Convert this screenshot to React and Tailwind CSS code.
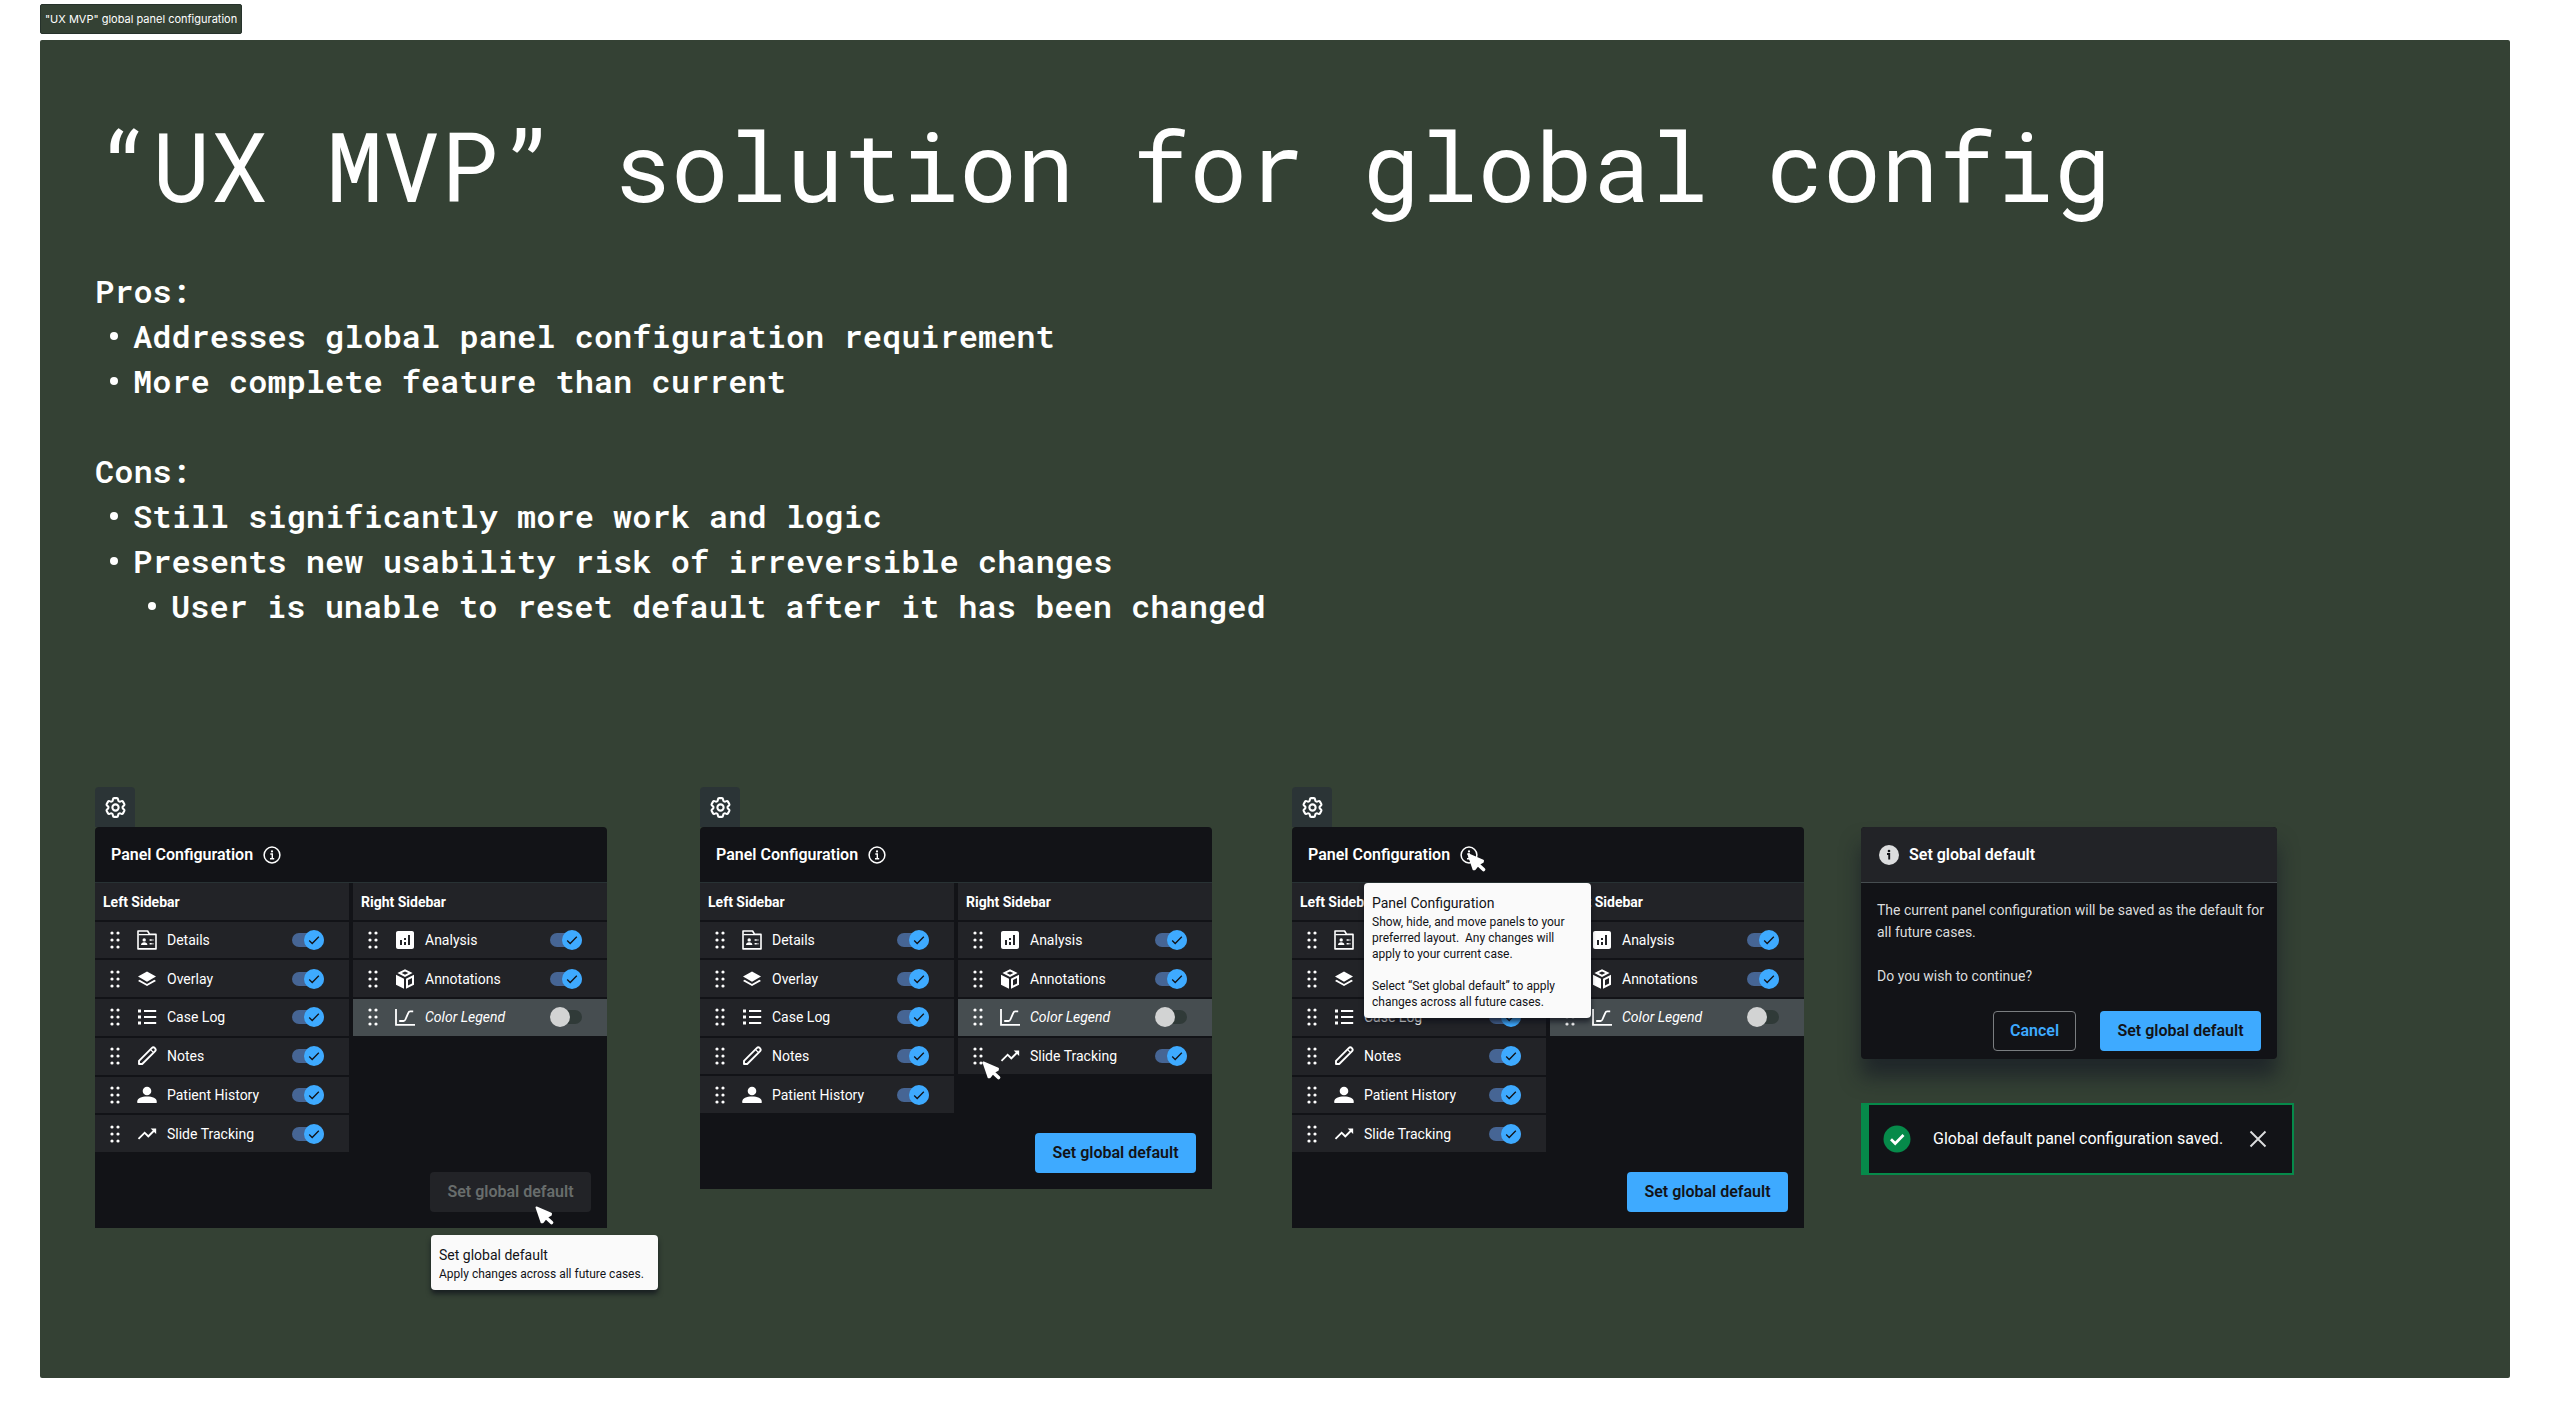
import React from "react";
import { HiOutlineCog6Tooth } from "react-icons/hi2";
import { MdTrendingUp, MdAnalytics } from "react-icons/md";

function DetailsIcon() {
  return (
    <svg viewBox="0 0 20 20" className="size-5" fill="none" stroke="currentColor" strokeWidth="1.6" aria-hidden="true">
      <path d="M1 18.9V1h9.6l2 3.4H19v14.5H1z" strokeLinejoin="round" />
      <path d="M1.5 4.6h11" strokeWidth="1.3" />
      <circle cx="7.2" cy="9.9" r="1.7" fill="currentColor" stroke="none" />
      <path d="M4 14.9c0-1.9 1.4-2.7 3.2-2.7s3.2.8 3.2 2.7z" fill="currentColor" stroke="none" />
      <path d="M12.6 10h3.8M12.6 13.8h3.8" strokeDasharray="2.2 .7" />
    </svg>
  );
}

function LayersIcon() {
  return (
    <svg viewBox="0 0 20 20" className="size-5" fill="currentColor" aria-hidden="true">
      <path d="M10 2.600l9 5-9 5.200-9-5.200z" />
      <path d="M10 14.900L2.600 10.700 1 11.900l9 5.200 9-5.200-1.600-1.200z" />
    </svg>
  );
}

function PersonIcon() {
  return (
    <svg viewBox="0 0 20 20" className="size-5" fill="currentColor" aria-hidden="true">
      <circle cx="10" cy="6" r="4.300" />
      <path d="M.300 18v-1.800c0-3 4.200-4.700 9.700-4.700s9.700 1.700 9.700 4.700V18z" />
    </svg>
  );
}

function ListIcon() {
  return (
    <svg viewBox="0 0 20 20" className="size-5" fill="currentColor" aria-hidden="true">
      <path d="M1 2.4h3v3H1zM1 8.5h3v3H1zM1 14.6h3v3H1zM7 2.9h12.2v2H7zM7 9h12.2v2H7zM7 15.1h12.2v2H7z" />
    </svg>
  );
}

function PencilIcon() {
  return (
    <svg viewBox="0 0 20 20" className="size-5" fill="none" stroke="currentColor" strokeWidth="1.9" strokeLinejoin="round" aria-hidden="true">
      <path d="M2 18v-3.200L14.700 2.100a2.100 2.100 0 0 1 3.200 3.200L5.200 18H2z" />
      <path d="M13.600 3.600l2.800 2.800" strokeWidth="1.3" />
    </svg>
  );
}

function CubeIcon() {
  return (
    <svg viewBox="0 0 20 20" className="size-5" fill="currentColor" aria-hidden="true">
      <path fillRule="evenodd" d="M10 .3l7.6 3.8L10 7.9 2.4 4.100zM10 2.500L6.700 4.100 10 5.700l3.300-1.600z" />
      <path d="M1 5.700l8 4v10L1 15.700z" />
      <path fillRule="evenodd" d="M19 5.700l-8 4v10l8-4zM17 9l-4 2v5.400l4-2z" />
    </svg>
  );
}

function LegendIcon() {
  return (
    <svg viewBox="0 0 20 20" className="size-5" fill="none" stroke="currentColor" strokeWidth="1.8" aria-hidden="true">
      <path d="M1 2v15.800h19" />
      <path d="M4.200 14h4.300c1 0 1.500-.600 1.900-1.500l2.900-6.600c.4-1 .9-1.500 1.900-1.500h3" />
    </svg>
  );
}

function InfoIcon() {
  return (
    <svg viewBox="0 0 18 18" className="size-[18px]" fill="none" stroke="currentColor" aria-hidden="true">
      <circle cx="9" cy="9" r="7.900" strokeWidth="1.500" />
      <path d="M7.300 8h2v4.600M7 12.700h4.200" strokeWidth="1.400" />
      <circle cx="9" cy="5.400" r="1.100" fill="currentColor" stroke="none" />
    </svg>
  );
}

function Cursor({ className }) {
  return (
    <svg viewBox="0 0 19 19" className={"absolute z-20 size-[19px] text-white " + className} fill="currentColor" stroke="currentColor" strokeLinejoin="round" strokeLinecap="round" aria-hidden="true">
      <path d="M1.500 1.500L16 7.700l-.2 1.200-4 2.300-4 5-1.200.1z" strokeWidth="2" />
      <path d="M10.500 11l6 5.500" strokeWidth="3.600" />
    </svg>
  );
}

function Grip() {
  return (
    <svg viewBox="0 0 10 18" className="h-[18px] w-2.5" fill="currentColor" aria-hidden="true">
      {[2, 9, 16].map((y) => (
        <React.Fragment key={y}>
          <circle cx="2" cy={y} r="1.600" />
          <circle cx="8" cy={y} r="1.600" />
        </React.Fragment>
      ))}
    </svg>
  );
}

const PANELS = {
  details: { label: "Details", icon: <DetailsIcon /> },
  overlay: { label: "Overlay", icon: <LayersIcon /> },
  caseLog: { label: "Case Log", icon: <ListIcon /> },
  notes: { label: "Notes", icon: <PencilIcon /> },
  history: { label: "Patient History", icon: <PersonIcon /> },
  tracking: { label: "Slide Tracking", icon: <MdTrendingUp className="size-[22px]" /> },
  analysis: { label: "Analysis", icon: <MdAnalytics className="size-6" /> },
  annotations: { label: "Annotations", icon: <CubeIcon /> },
  legend: { label: "Color Legend", icon: <LegendIcon />, off: true },
};

function Switch({ id, on }) {
  return (
    <span className="relative flex h-5 w-8 items-center">
      <input
        id={id}
        type="checkbox"
        role="switch"
        defaultChecked={on}
        className="peer h-3.5 w-8 appearance-none rounded-full bg-[#303a38] checked:bg-[#466594]"
      />
      <span className="pointer-events-none absolute left-0 flex size-5 items-center justify-center rounded-full bg-[#d2d3d3] text-transparent peer-checked:left-3 peer-checked:bg-[#3eaaff] peer-checked:text-[#121317]">
        <svg viewBox="0 0 12 12" className="size-3" fill="none" stroke="currentColor" strokeWidth="1.300" aria-hidden="true">
          <path d="M1.200 6.500l3 3L10.800 2.800" />
        </svg>
      </span>
    </span>
  );
}

function Column({ title, items, rows, prefix }) {
  return (
    <section className={"grid gap-0.5 " + rows}>
      <h3 className="flex items-center bg-[#222327] pt-0.5 pl-2 text-sm font-bold">{title}</h3>
      {items.map((key) => {
        const { label, icon, off } = PANELS[key];
        const id = prefix + "-" + key;
        return (
          <div key={key} className={"flex items-center pr-[25px] pl-[15px] " + (off ? "bg-[#464d50]" : "bg-[#222327]")}>
            <button type="button" aria-label={"Move " + label} className="shrink-0">
              <Grip />
            </button>
            <span className="ml-3 flex w-[30px] shrink-0 items-center justify-center">{icon}</span>
            <label htmlFor={id} className={"ml-[5px] flex-1 text-sm " + (off ? "italic" : "")}>
              {label}
            </label>
            <Switch id={id} on={!off} />
          </div>
        );
      })}
    </section>
  );
}

function PrimaryButton({ disabled }) {
  return (
    <button
      type="button"
      disabled={disabled}
      className="h-10 w-[161px] rounded bg-[#3eaaff] text-base font-semibold text-[#121317] disabled:bg-[#222327] disabled:text-[#686d6c]"
    >
      Set global default
    </button>
  );
}

function Tooltip({ title, className, children }) {
  return (
    <div role="tooltip" className={"absolute z-10 w-[227px] rounded bg-[#fafafa] px-2 pt-2.5 pb-2 text-[#121317] shadow-[0_4px_5px_rgba(10,14,25,0.65)] " + className}>
      <p className="text-sm leading-[21px]">{title}</p>
      <div className="text-xs leading-4 whitespace-nowrap">{children}</div>
    </div>
  );
}

function ConfigPanel({ name, left, right, rows, disabled, className, children }) {
  return (
    <div className={"relative w-[512px] shrink-0 text-white " + className}>
      <button type="button" aria-label="Settings" className="flex size-10 items-center justify-center rounded-t bg-[#2b3436]">
        <HiOutlineCog6Tooth className="size-[25px]" strokeWidth={2} />
      </button>
      <div className="rounded-t bg-[#121317]">
        <header className="flex h-14 items-center gap-2.5 border-b border-[#283234] px-4">
          <h2 className="text-base font-semibold">Panel Configuration</h2>
          <button type="button" aria-label="About panel configuration">
            <InfoIcon />
          </button>
        </header>
        <div className="grid grid-cols-2 gap-1">
          <Column title="Left Sidebar" items={left} rows={rows} prefix={name + "-left"} />
          <Column title="Right Sidebar" items={right} rows={rows} prefix={name + "-right"} />
        </div>
        <footer className="flex justify-end px-4 pt-5 pb-4">
          <PrimaryButton disabled={disabled} />
        </footer>
      </div>
      {children}
    </div>
  );
}

function Bullet({ children, nested }) {
  return (
    <li>
      <div className="flex items-center">
        <span className="flex w-[38px] justify-center">
          <span className="size-2 rounded-full bg-white" />
        </span>
        {children}
      </div>
      {nested}
    </li>
  );
}

const SIX = ["details", "overlay", "caseLog", "notes", "history", "tracking"];
const RIGHT = ["analysis", "annotations", "legend"];

export default function App() {
  return (
    <div className="min-h-screen bg-white px-10 pt-1 pb-10 font-[Roboto,sans-serif]">
      <div className="flex h-[30px] w-fit items-center rounded-xs border border-[#26322b] bg-[#344134] px-1 font-[Inter,sans-serif] text-[11px] text-white">
        "UX MVP" global panel configuration
      </div>
      <main className="mt-1.5 min-h-[1338px] rounded-xs bg-[#344134] px-[55px] pt-[69px] text-white">
        <div className="font-[Roboto_Mono,DejaVu_Sans_Mono,monospace]">
          <h1 className="text-[96px] leading-[112px]">“UX MVP” solution for global config</h1>
          <div className="mt-[47px] text-[32px] leading-[45px] font-semibold">
            <h2>Pros:</h2>
            <ul>
              <Bullet>Addresses global panel configuration requirement</Bullet>
              <Bullet>More complete feature than current</Bullet>
            </ul>
            <h2 className="mt-[45px]">Cons:</h2>
            <ul>
              <Bullet>Still significantly more work and logic</Bullet>
              <Bullet
                nested={
                  <ul className="pl-[38px]">
                    <Bullet>User is unable to reset default after it has been changed</Bullet>
                  </ul>
                }
              >
                Presents new usability risk of irreversible changes
              </Bullet>
            </ul>
          </div>
        </div>

        <div className="mt-[159px] flex items-start">
          <ConfigPanel name="first" left={SIX} right={RIGHT} rows="h-[269px] grid-rows-7" disabled className="">
            <Cursor className="top-[419px] left-[440px]" />
            <Tooltip title="Set global default" className="top-[448px] left-[336px]">
              Apply changes across all future cases.
            </Tooltip>
          </ConfigPanel>

          <ConfigPanel
            name="second"
            left={SIX.slice(0, 5)}
            right={[...RIGHT, "tracking"]}
            rows="h-[230px] grid-rows-6"
            className="ml-[93px]"
          >
            <Cursor className="top-[274px] left-[282px]" />
          </ConfigPanel>

          <ConfigPanel name="third" left={SIX} right={RIGHT} rows="h-[269px] grid-rows-7" className="ml-20">
            <Cursor className="top-[66px] left-[175px]" />
            <Tooltip title="Panel Configuration" className="top-[96px] left-[72px]">
              <p>
                Show, hide, and move panels to your
                <br />
                preferred layout.&nbsp; Any changes will
                <br />
                apply to your current case.
              </p>
              <p className="mt-4">
                Select “Set global default” to apply
                <br />
                changes across all future cases.
              </p>
            </Tooltip>
          </ConfigPanel>

          <div className="mt-10 ml-[57px] flex flex-col items-start gap-11">
            <section role="dialog" aria-labelledby="dialog-title" className="w-[416px] rounded bg-[#121317] shadow-[0_18px_20px_rgba(18,22,35,0.6)]">
              <header className="flex h-14 items-center gap-2.5 rounded-t border-b border-[#464d50] bg-[#222327] px-[18px]">
                <svg viewBox="0 0 20 20" className="size-5" aria-hidden="true">
                  <circle cx="10" cy="10" r="10" fill="#dcddde" />
                  <circle cx="10" cy="6" r="1.300" fill="#121317" />
                  <path d="M8 9h2.200v5.500" fill="none" stroke="#121317" strokeWidth="1.900" />
                </svg>
                <h2 id="dialog-title" className="text-base font-semibold">Set global default</h2>
              </header>
              <div className="pt-4 pr-2 pl-4 text-sm leading-[22px] text-[#dcddde]">
                <p>The current panel configuration will be saved as the default for all future cases.</p>
                <p className="mt-[22px]">Do you wish to continue?</p>
              </div>
              <footer className="mt-6 flex justify-end gap-6 pr-4 pb-2">
                <button type="button" className="h-10 w-[83px] rounded border border-[#7a7d80] text-base font-semibold text-[#3eaaff]">
                  Cancel
                </button>
                <PrimaryButton />
              </footer>
            </section>

            <div role="status" className="flex h-[72px] w-[433px] items-center border-2 border-l-8 border-[#068a4a] bg-[#121317] pr-6 pl-3.5">
              <svg viewBox="0 0 28 28" className="size-7" aria-hidden="true">
                <circle cx="14" cy="14" r="13.500" fill="#068a4a" />
                <path d="M8 14.200l4.200 4.200L20.500 10" fill="none" stroke="#fff" strokeWidth="2.800" />
              </svg>
              <p className="ml-[22px] flex-1 text-base whitespace-nowrap">Global default panel configuration saved.</p>
              <button type="button" aria-label="Dismiss" className="flex size-5 items-center justify-center text-[#dcddde]">
                <svg viewBox="0 0 18 18" className="size-[18px]" fill="none" stroke="currentColor" strokeWidth="1.900" aria-hidden="true">
                  <path d="M1.500 1.500l15 15M16.500 1.500l-15 15" />
                </svg>
              </button>
            </div>
          </div>
        </div>
      </main>
    </div>
  );
}
